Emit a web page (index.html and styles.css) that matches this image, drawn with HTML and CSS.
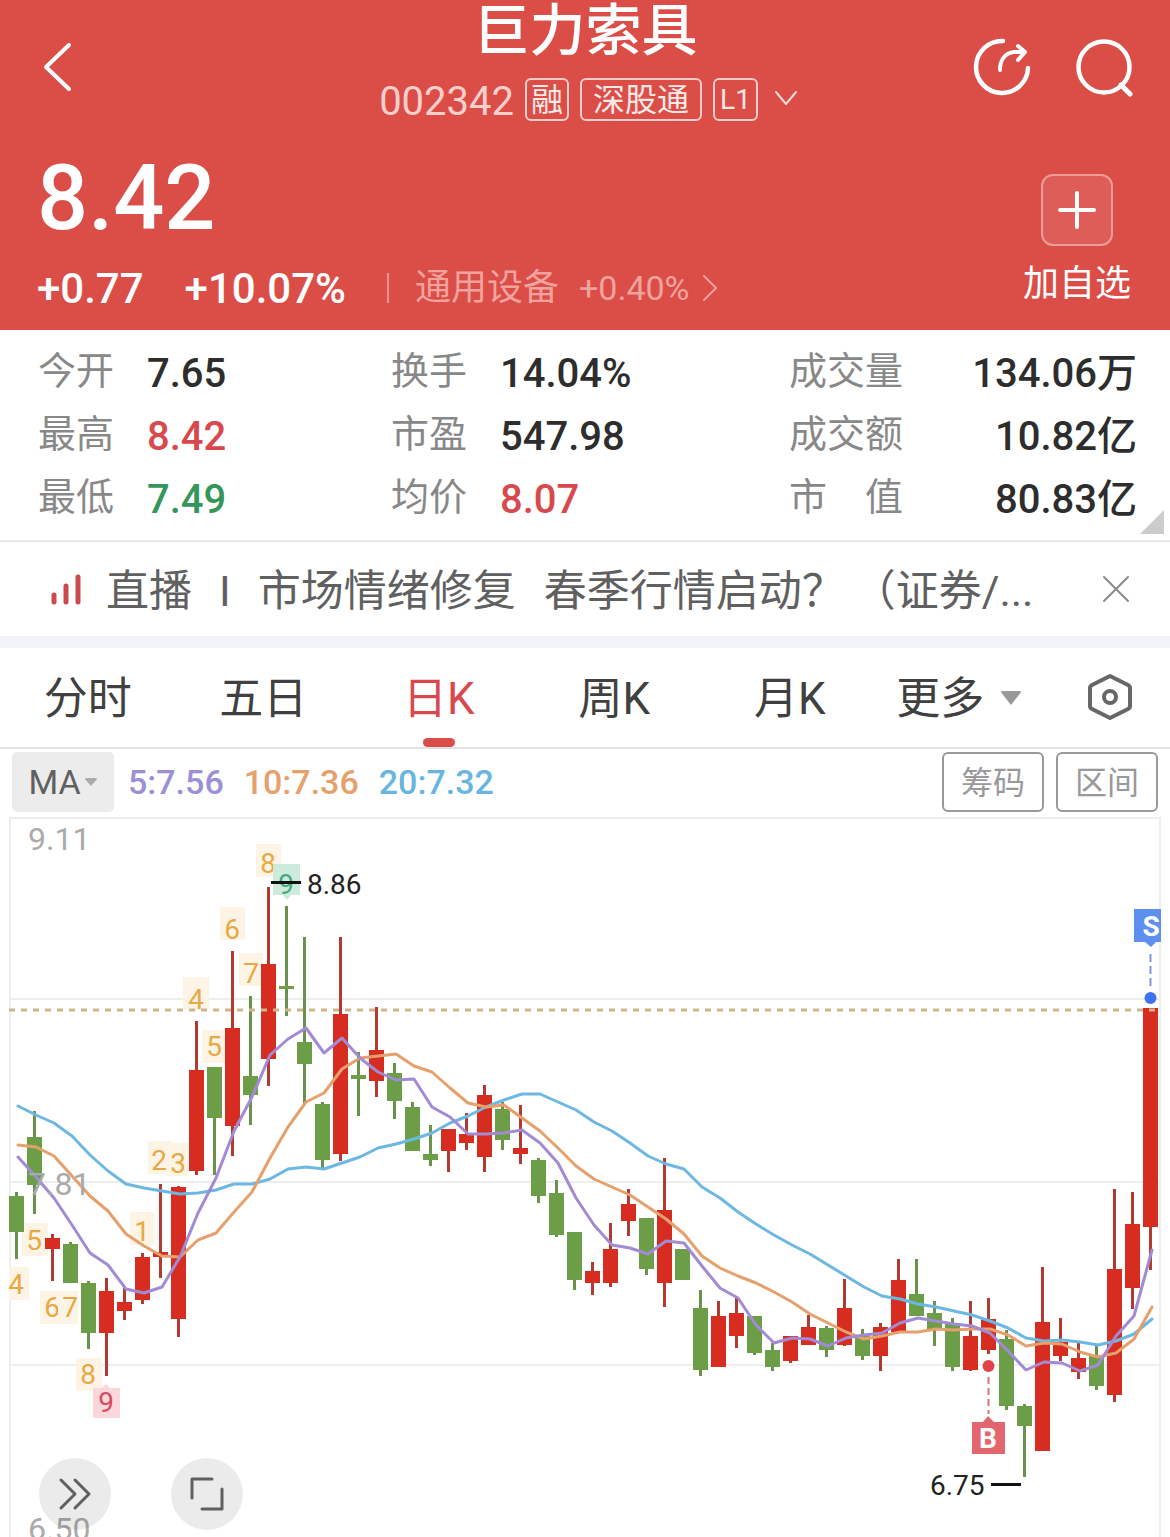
FILE: index.html
```html
<!DOCTYPE html>
<html lang="zh-CN">
<head>
    <meta charset="UTF-8">
    <meta name="viewport" content="width=device-width, initial-scale=1.0">
    <title>巨力索具 002342</title>
    <link rel="stylesheet" href="styles.css">
</head>
<body>

<!-- 顶部行情 -->
<header class="quote">
    <div class="topbar">
        <button class="icon-btn" aria-label="返回">
            <svg width="40" height="56" viewBox="0 0 40 56"><path d="M32 6 9 28l23 22" stroke-width="4"/></svg>
        </button>
        <div class="stock">
            <h1>巨力索具</h1>
            <div class="stock-info">
                <span class="code">002342</span>
                <span class="tag">融</span>
                <span class="tag tag-wide">深股通</span>
                <span class="tag tag-level">L1</span>
                <svg class="chevron-down" width="24" height="18" viewBox="0 0 24 18"><path d="M2 2l10 12L22 2" stroke-width="2"/></svg>
            </div>
        </div>
        <div class="actions">
            <button class="icon-btn" aria-label="分享">
                <svg width="60" height="60" viewBox="0 0 60 60"><path d="M31 4A26 26 0 1 0 56 31" stroke-width="4.5"/><path d="M28 33C28 23 33 16 42 15h10M46 9l7 6-7 8" stroke-width="4"/></svg>
            </button>
            <button class="icon-btn" aria-label="搜索">
                <svg width="60" height="60" viewBox="0 0 60 60"><circle cx="30" cy="30" r="25.5" stroke-width="4.5"/><path d="M47 48l9 9" stroke-width="5"/></svg>
            </button>
        </div>
    </div>

    <div class="price-row">
        <div>
            <div class="price">8.42</div>
            <div class="change">
                <span>+0.77</span>
                <span>+10.07%</span>
                <a class="sector" href="#">
                    <span>通用设备</span>
                    <span class="sector-rate">+0.40%</span>
                    <svg width="16" height="28" viewBox="0 0 16 28"><path d="M2 2l12 12L2 26" stroke-width="2"/></svg>
                </a>
            </div>
        </div>
        <div class="watch">
            <button class="add-btn" id="add" aria-label="加自选">
                <svg width="40" height="40" viewBox="0 0 40 40"><path d="M20 3v34M3 20h34" stroke-width="4"/></svg>
            </button>
            <label for="add">加自选</label>
        </div>
    </div>
</header>

<!-- 主要指标 -->
<section class="stats">
    <dl>
        <div><dt>今开</dt><dd>7.65</dd></div>
        <div><dt>最高</dt><dd class="up">8.42</dd></div>
        <div><dt>最低</dt><dd class="down">7.49</dd></div>
    </dl>
    <dl>
        <div><dt>换手</dt><dd>14.04%</dd></div>
        <div><dt>市盈</dt><dd>547.98</dd></div>
        <div><dt>均价</dt><dd class="up">8.07</dd></div>
    </dl>
    <dl class="amounts">
        <div><dt>成交量</dt><dd>134.06万</dd></div>
        <div><dt>成交额</dt><dd>10.82亿</dd></div>
        <div><dt>市　值</dt><dd>80.83亿</dd></div>
    </dl>
</section>

<!-- 直播条 -->
<section class="live">
    <svg class="live-icon" width="32" height="32" viewBox="0 0 32 32"><path d="M4 22v7M16 13v16M28 4v25" stroke-width="5"/></svg>
    <a class="live-text" href="#"><span>直播</span><span class="bar">I</span><span>市场情绪修复</span><span class="next">春季行情启动？</span><span class="more">（证券/...</span></a>
    <button class="close-btn" aria-label="关闭">
        <svg width="28" height="28" viewBox="0 0 28 28"><path d="M2 2l24 24M26 2L2 26" stroke-width="2"/></svg>
    </button>
</section>

<!-- 周期切换 -->
<nav class="tabs">
    <button>分时</button>
    <button>五日</button>
    <button class="active">日K</button>
    <button>周K</button>
    <button>月K</button>
    <button>更多<i class="caret"></i></button>
    <button class="settings" aria-label="设置">
        <svg width="48" height="48" viewBox="0 0 48 48"><path d="M24 3l18 9q2 1 2 3v18q0 2-2 3l-18 9-18-9q-2-1-2-3V15q0-2 2-3z"/><circle cx="24" cy="24" r="6"/></svg>
    </button>
</nav>

<!-- 均线 -->
<div class="toolbar">
    <button class="ma-btn">MA<i class="caret"></i></button>
    <span class="ma5">5:7.56</span>
    <span class="ma10">10:7.36</span>
    <span class="ma20">20:7.32</span>
    <div class="tools">
        <button>筹码</button>
        <button>区间</button>
    </div>
</div>

<!-- K线图 -->
<main class="chart">
    <svg class="kline" viewBox="0 816 1170 721" role="img" aria-label="日K线">
        <path class="grid" d="M10 1540V818H1160V1540M10 999H1160M10 1182H1160M10 1365H1160"/>

        <!-- 九转序列 -->
        <g class="seq">
            <rect x="9" y="1267" width="20" height="33"/><text x="16" y="1294">4</text>
            <rect x="22" y="1223" width="26" height="33"/><text x="34" y="1250">5</text>
            <rect x="40" y="1291" width="26" height="33"/><text x="52" y="1317">6</text>
            <rect x="58" y="1291" width="20" height="33"/><text x="70" y="1317">7</text>
            <rect x="76" y="1358" width="26" height="33"/><text x="88" y="1384">8</text>
            <rect x="130" y="1212" width="25" height="33"/><text x="142" y="1241">1</text>
            <rect x="148" y="1141" width="25" height="33"/><text x="159" y="1170">2</text>
            <rect x="166" y="1143" width="22" height="33"/><text x="178" y="1173">3</text>
            <rect x="183" y="977" width="26" height="33"/><text x="196" y="1009">4</text>
            <rect x="202" y="1030" width="24" height="33"/><text x="214" y="1056">5</text>
            <rect x="220" y="907" width="25" height="33"/><text x="232" y="939">6</text>
            <rect x="239" y="953" width="24" height="33"/><text x="251" y="983">7</text>
            <rect x="256" y="844" width="25" height="33"/><text x="268" y="873">8</text>
        </g>
        <path class="nine-low" d="M93 1388h9l4-4 4 4h10v30H93z"/>
        <text class="nine-low-text" x="106" y="1412">9</text>
        <path class="nine-high" d="M273 864h27v31h-9l-4 5-4-5h-10z"/>
        <text class="nine-high-text" x="286" y="894">9</text>

        <!-- 影线 -->
        <path class="wick fall" d="M16.5 1192V1259M34.5 1111V1214M70.5 1242V1283M88.5 1281V1349M214.5 1067V1175M250.5 996V1125M286.5 906V1016M304.5 937V1103M322.5 1102V1168M358.5 1052V1116M394.5 1063V1119M412.5 1102V1151M430.5 1125V1166M502.5 1102V1150M538.5 1158V1203M556.5 1180V1237M574.5 1232V1290M646.5 1218V1275M700.5 1290V1376M754.5 1316V1355M772.5 1343V1371M826.5 1326V1357M862.5 1329V1360M916.5 1259V1316M934.5 1301V1346M952.5 1318V1371M1006.5 1330V1410M1024.5 1404V1477M1096.5 1346V1390"/>
        <path class="wick rise" d="M52.5 1234V1281M106.5 1278V1376M124.5 1288V1320M142.5 1253V1304M160.5 1184V1278M178.5 1186V1337M196.5 1021V1175M232.5 951V1156M268.5 887V1086M340.5 937V1161M376.5 1007V1097M448.5 1129V1172M466.5 1113V1150M484.5 1085V1172M520.5 1105V1164M592.5 1262V1295M610.5 1223V1287M628.5 1189V1236M664.5 1158V1307M718.5 1301V1367M736.5 1297V1348M790.5 1336V1363M808.5 1315V1345M844.5 1279V1346M880.5 1323V1371M898.5 1259V1332M970.5 1301V1371M988.5 1298V1354M1042.5 1267V1451M1060.5 1318V1361M1078.5 1343V1379M1114.5 1189V1402M1132.5 1192V1309M1150.5 1008V1270"/>

        <!-- 实体 -->
        <path class="candle fall-body" d="M16.5 1196V1232M34.5 1137V1185M70.5 1244V1283M88.5 1283V1333M214.5 1067V1118M250.5 1076V1095M286.5 986V989M304.5 1042V1064M322.5 1104V1160M358.5 1075V1079M394.5 1073V1101M412.5 1107V1151M430.5 1154V1160M502.5 1109V1140M538.5 1160V1196M556.5 1193V1235M574.5 1232V1280M646.5 1218V1269M682.5 1249V1280M700.5 1308V1370M754.5 1316V1353M772.5 1350V1367M826.5 1328V1350M862.5 1335V1356M916.5 1294V1316M934.5 1313V1329M952.5 1323V1367M1006.5 1339V1406M1024.5 1406V1426M1096.5 1355V1386"/>
        <path class="candle rise-body" d="M52.5 1238V1249M106.5 1291V1333M124.5 1302V1311M142.5 1257V1300M160.5 1252V1257M178.5 1187V1319M196.5 1070V1171M232.5 1028V1126M268.5 964V1059M340.5 1014V1154M376.5 1050V1081M448.5 1129V1151M466.5 1134V1143M484.5 1095V1157M520.5 1148V1154M592.5 1271V1283M610.5 1249V1283M628.5 1204V1221M664.5 1210V1283M718.5 1316V1367M736.5 1313V1336M790.5 1336V1361M808.5 1327V1345M844.5 1308V1345M880.5 1327V1356M898.5 1280V1332M970.5 1336V1370M988.5 1319V1350M1042.5 1322V1451M1060.5 1342V1356M1078.5 1358V1372M1114.5 1269V1395M1132.5 1224V1288M1150.5 1008V1227"/>

        <!-- 最新价 -->
        <path class="last-price" d="M9 1010H1160"/>

        <!-- MA20 / MA10 / MA5 -->
        <polyline class="line line20" points="18,1106 36,1115 54,1123 72,1136 90,1155 108,1171 126,1184 144,1188 162,1191 180,1194 198,1193 216,1190 234,1184 252,1184 270,1179 288,1169 306,1167 324,1169 342,1163 360,1157 378,1148 396,1144 414,1139 432,1133 450,1123 468,1116 486,1107 504,1100 522,1094 540,1094 558,1102 576,1110 594,1122 612,1131 630,1143 648,1156 666,1164 684,1169 702,1187 720,1198 738,1212 756,1224 774,1235 792,1245 810,1254 828,1265 846,1276 864,1287 882,1296 900,1299 918,1304 936,1307 954,1311 972,1315 990,1321 1008,1328 1026,1338 1044,1341 1062,1340 1080,1342 1098,1345 1116,1341 1134,1334 1152,1319"/>
        <polyline class="line line10" points="18,1145 36,1147 54,1156 72,1176 90,1196 108,1211 126,1234 144,1246 162,1256 180,1257 198,1240 216,1233 234,1212 252,1192 270,1158 288,1127 306,1102 324,1093 342,1069 360,1058 378,1056 396,1054 414,1066 432,1072 450,1088 468,1103 486,1107 504,1105 522,1118 540,1131 558,1148 576,1166 594,1179 612,1187 630,1195 648,1207 666,1219 684,1234 702,1256 720,1268 738,1276 756,1283 774,1292 792,1302 810,1314 828,1323 846,1332 864,1339 882,1336 900,1332 918,1332 936,1329 954,1330 972,1329 990,1329 1008,1335 1026,1346 1044,1343 1062,1344 1080,1352 1098,1357 1116,1353 1134,1339 1152,1307"/>
        <polyline class="line line5" points="18,1157 36,1177 54,1198 72,1225 90,1253 108,1265 126,1289 144,1293 162,1287 180,1257 198,1213 216,1178 234,1131 252,1097 270,1055 288,1039 306,1028 324,1053 342,1038 360,1058 378,1072 396,1080 414,1079 432,1107 450,1117 468,1134 486,1134 504,1133 522,1130 540,1143 558,1163 576,1198 594,1225 612,1245 630,1248 648,1254 666,1241 684,1243 702,1266 720,1288 738,1298 756,1325 774,1343 792,1338 810,1339 828,1346 846,1338 864,1335 882,1333 900,1323 918,1318 936,1321 954,1324 972,1326 990,1333 1008,1351 1026,1370 1044,1362 1062,1363 1080,1371 1098,1365 1116,1336 1134,1316 1152,1250"/>

        <!-- 最高最低 -->
        <path class="mark" d="M271 882.5h30M991 1484.5h30"/>
        <text class="mark-text" x="307" y="894">8.86</text>
        <text class="mark-text" x="930" y="1495">6.75</text>

        <!-- 买卖点 -->
        <path class="sell" d="M1134 909h27v33h-5l-5 5-6-5h-11z"/>
        <path class="sell-line" d="M1150.5 954V990"/>
        <circle class="sell-dot" cx="1150.5" cy="998" r="6"/>
        <text class="point" x="1151" y="936">S</text>
        <circle class="buy-dot" cx="988.5" cy="1366" r="6"/>
        <path class="buy-line" d="M988.5 1377V1414"/>
        <path class="buy" d="M972 1422h11l5-6 6 6h11v32h-33z"/>
        <text class="point" x="988" y="1448">B</text>

        <g class="axis">
            <text x="28" y="850">9.11</text>
            <text x="28" y="1195">7.81</text>
            <text x="28" y="1540">6.50</text>
        </g>
    </svg>
    <div class="chart-btns">
        <button aria-label="快进"><svg width="40" height="40" viewBox="0 0 40 40"><path d="M6 6l14 14L6 34M20 6l14 14-14 14"/></svg></button>
        <button aria-label="全屏"><svg width="40" height="40" viewBox="0 0 40 40"><path d="M5 24V5h20M35 15v20H15"/></svg></button>
    </div>
</main>

</body>
</html>
```
FILE: styles.css
```css
* {
    margin: 0;
    padding: 0;
    box-sizing: border-box;
}

body {
    font-family: Roboto, "Noto Sans CJK SC", sans-serif;
    background: #fff;
    color: #2d2d2d;
    overflow-x: hidden;
}

button {
    border: none;
    background: none;
    font: inherit;
    color: inherit;
    cursor: pointer;
}

a {
    color: inherit;
    text-decoration: none;
}

svg {
    display: block;
    fill: none;
    stroke: currentColor;
    stroke-linecap: round;
    stroke-linejoin: round;
}

/* 顶部 */
.quote {
    padding: 0 36px 20px 37px;
    background: #db4e48;
    color: #fff;
}

.topbar {
    display: grid;
    grid-template-columns: 1fr auto 1fr;
    align-items: center;
    height: 134px;
}

.topbar .icon-btn {
    justify-self: start;
}

.stock {
    align-self: start;
    text-align: center;
}

.stock h1 {
    font-size: 56px;
    font-weight: 500;
    line-height: 62px;
}

.stock-info {
    display: flex;
    align-items: center;
    gap: 11px;
    height: 44px;
    margin-top: 15px;
    padding-left: 6px;
}

.code {
    padding-top: 4px;
    font-size: 40px;
    color: #ffcfcc;
}

.tag {
    height: 43px;
    padding: 0 4px;
    border: 2px solid #f8cdca;
    border-radius: 6px;
    font-size: 32px;
    line-height: 40px;
    color: #ffe9e7;
}

.tag-wide {
    padding: 0 11px;
}

.tag-level {
    padding: 0 5px;
    font-size: 28px;
}

.chevron-down {
    margin-left: 5px;
    color: #fbdad8;
}

.actions {
    display: flex;
    justify-content: flex-end;
    gap: 42px;
}

.price-row {
    display: flex;
    justify-content: space-between;
    align-items: flex-end;
}

.price {
    font-size: 90px;
    font-weight: 500;
    line-height: 100px;
    margin: 15px 0 17px;
}

.change {
    display: flex;
    align-items: center;
    gap: 41px;
    height: 44px;
    font-size: 42px;
    font-weight: 500;
}

.sector {
    display: flex;
    align-items: center;
    gap: 12px;
    font-size: 36px;
    font-weight: 400;
    line-height: 44px;
    color: #f1a29e;
}

.sector::before {
    content: "";
    width: 2px;
    height: 30px;
    margin-right: 14px;
    background: #ec908b;
}

.sector-rate {
    margin-left: 8px;
    font-size: 34px;
}

.watch {
    display: flex;
    flex-direction: column;
    align-items: center;
    gap: 14px;
    padding: 0 3px 2px 0;
    font-size: 36px;
    line-height: 48px;
}

.add-btn {
    display: flex;
    justify-content: center;
    align-items: center;
    width: 72px;
    height: 72px;
    border: 2px solid #eb9d99;
    border-radius: 12px;
    background: #de5d58;
}

/* 指标 */
.stats {
    position: relative;
    display: grid;
    grid-template-columns: 353fr 398fr 348fr;
    padding: 11px 33px 10px 38px;
    border-bottom: 2px solid #e8e8e8;
}

.stats::after {
    content: "";
    position: absolute;
    right: 6px;
    bottom: 6px;
    border-left: 24px solid transparent;
    border-bottom: 24px solid #ccc;
}

.stats dl div {
    display: flex;
    height: 63px;
}

.stats dt {
    width: 109px;
    font-size: 38px;
    line-height: 60px;
    color: #888;
}

.stats dd {
    font-size: 40px;
    font-weight: 500;
    line-height: 66px;
}

.stats .amounts div {
    justify-content: space-between;
}

.amounts dt {
    width: auto;
}

.up {
    color: #d9484c;
}

.down {
    color: #35965a;
}

/* 直播 */
.live {
    display: flex;
    align-items: center;
    height: 106px;
    padding: 0 40px 0 50px;
    border-bottom: 12px solid #f1f3f8;
}

.live-icon {
    color: #cd4a4a;
}

.live-text {
    display: flex;
    flex: 1;
    align-items: baseline;
    margin-left: 24px;
    padding-bottom: 4px;
    font-size: 43px;
    color: #606060;
    white-space: nowrap;
}

.live-text .bar {
    padding: 0 27px;
}

.live-text .next {
    margin-left: 28px;
}

.live-text .more {
    margin-left: 8px;
}

.close-btn {
    color: #8a8a8a;
}

/* 周期 */
.tabs {
    display: flex;
    height: 101px;
    border-bottom: 2px solid #e3e3e3;
    color: #404040;
}

.tabs button {
    position: relative;
    display: flex;
    flex: 3;
    justify-content: center;
    align-items: center;
    padding-bottom: 5px;
    font-size: 44px;
}

.tabs .active {
    color: #d9484c;
}

.tabs .active::after {
    content: "";
    position: absolute;
    bottom: 0;
    width: 32px;
    height: 9px;
    border-radius: 5px;
    background: #db4e48;
}

.caret {
    border: 11px solid transparent;
    border-top: 14px solid #999;
    border-bottom: 0;
    border-radius: 3px;
}

.tabs .caret {
    margin: 6px 12px 0 16px;
}

.tabs .settings {
    flex: 2;
    padding-bottom: 2px;
    color: #666;
    stroke-width: 4;
}

.settings svg {
    margin-right: 3px;
}

/* 均线栏 */
.toolbar {
    display: flex;
    align-items: center;
    gap: 20px;
    padding: 3px 12px 4px;
    font-size: 34px;
    font-weight: 500;
}

.ma-btn {
    display: flex;
    justify-content: center;
    align-items: center;
    gap: 3px;
    width: 102px;
    height: 60px;
    margin-right: -6px;
    border-radius: 5px;
    background: #ececec;
    color: #606060;
    font-weight: 400;
}

.ma-btn .caret {
    border-width: 8px 7px 0;
    border-top-color: #aaa;
}

.ma5 {
    color: #9b8fd6;
}

.ma10 {
    color: #e5a06c;
}

.ma20 {
    color: #68b5e0;
}

.tools {
    display: flex;
    gap: 12px;
    margin-left: auto;
}

.tools button {
    width: 102px;
    height: 60px;
    padding-bottom: 4px;
    border: 2px solid #999;
    border-radius: 6px;
    font-size: 32px;
    font-weight: 400;
    color: #999;
}

/* K线 */
.chart {
    position: relative;
}

.kline {
    width: 100%;
    stroke: none;
}

.kline path {
    stroke-linecap: butt;
    stroke-linejoin: miter;
}

.kline text {
    font-size: 28px;
}

.grid {
    stroke: #eee;
    stroke-width: 2;
}

.seq rect {
    fill: #fef4e6;
}

.seq text,
.nine-low-text,
.nine-high-text,
.point {
    text-anchor: middle;
}

.seq text {
    fill: #e8a843;
}

.nine-low {
    fill: #f9d7db;
}

.nine-low-text {
    fill: #d54a60;
}

.nine-high {
    fill: #cdeadd;
}

.nine-high-text {
    fill: #46aa7c;
}

.wick {
    stroke-width: 3;
}

.rise {
    stroke: #b23a32;
}

.fall {
    stroke: #6b924c;
}

.candle {
    stroke-width: 15;
}

.rise-body {
    stroke: #d62d20;
}

.fall-body {
    stroke: #6b9e47;
}

.last-price {
    stroke: #cdb58a;
    stroke-width: 3;
    stroke-dasharray: 6 6;
}

.line {
    stroke-width: 3;
}

.line5 {
    stroke: #a28bd4;
}

.line10 {
    stroke: #e6a06c;
}

.line20 {
    stroke: #6cb8e2;
}

.mark {
    stroke: #111;
    stroke-width: 3;
}

.mark-text {
    fill: #222;
}

.point {
    fill: #fff;
    font-weight: 700;
}

.sell {
    fill: #5d8ff0;
}

.sell-dot {
    fill: #3f73ee;
}

.sell-line {
    stroke: #8295dc;
    stroke-width: 2;
    stroke-dasharray: 8 4;
}

.buy {
    fill: #e3656e;
}

.buy-dot {
    fill: #e04448;
}

.buy-line {
    stroke: #d9727e;
    stroke-width: 2;
    stroke-dasharray: 7 4;
}

.kline .axis text {
    font-size: 32px;
    fill: #aaa;
}

.chart-btns {
    position: absolute;
    left: 39px;
    bottom: 7px;
    display: flex;
    gap: 60px;
}

.chart-btns button {
    display: flex;
    justify-content: center;
    align-items: center;
    width: 72px;
    height: 72px;
    border-radius: 50%;
    background: rgba(0, 0, 0, 0.08);
    color: #606060;
    stroke-width: 3;
}
```
